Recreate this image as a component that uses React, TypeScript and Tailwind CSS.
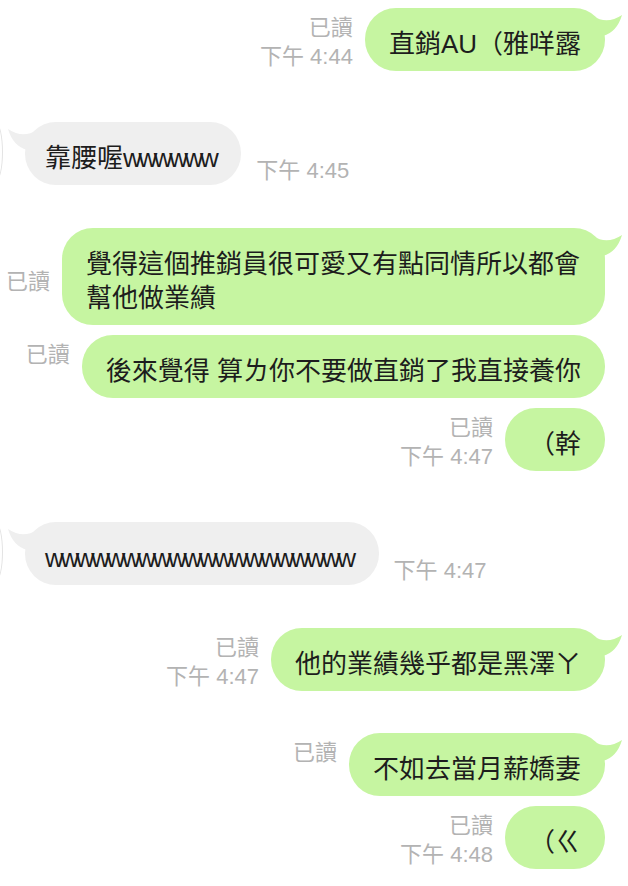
import type { ReactNode } from "react";

const FONT = "font-['Liberation_Sans','Noto_Sans_CJK_TC',sans-serif]";

function Meta({ read, time }: { read?: boolean; time?: string }) {
  return (
    <div className="flex shrink-0 flex-col items-end text-[22px] leading-[29px] text-[#b3b3b3]">
      {read && <span>已讀</span>}
      <span className="h-[29px]">{time ?? ""}</span>
    </div>
  );
}

function GreenTail() {
  return (
    <svg className="absolute top-0 right-[-18px]" width="30" height="30" viewBox="0 0 30 30">
      <path d="M0 8 Q14 17 29 7 Q24 24 10 28 Z" fill="#c6f5a1" />
    </svg>
  );
}

function GreyTail() {
  return (
    <svg className="absolute top-0 left-[-18px]" width="30" height="30" viewBox="0 0 30 30">
      <path d="M30 8 Q16 17 1 7 Q6 24 20 28 Z" fill="#efefef" />
    </svg>
  );
}

function Mine({
  children,
  time,
  tail,
  className,
}: {
  children: ReactNode;
  time?: string;
  tail?: boolean;
  className?: string;
}) {
  return (
    <div className={"flex items-end justify-end gap-[12px] " + (className ?? "")}>
      <Meta read time={time} />
      <div className="relative max-w-[543px] rounded-[31px] bg-[#c6f5a1] px-[24px] pt-[19px] pb-[10px] text-[26px] leading-[34px] text-[#1d1d1d]">
        {tail && <GreenTail />}
        {children}
      </div>
    </div>
  );
}

function Theirs({ children, time, className }: { children: ReactNode; time: string; className?: string }) {
  return (
    <div className={"flex items-end " + (className ?? "")}>
      <div className="mb-[3px] ml-[-11px] h-[58px] w-[14px] self-center rounded-[50%] border border-[#e3e3e3]" />
      <div className="relative ml-[22px] rounded-[31px] bg-[#efefef] pt-[19px] pr-[26px] pb-[10px] pl-[20px] text-[26px] leading-[34px] text-[#1d1d1d]">
        <GreyTail />
        {children}
      </div>
      <div className="ml-[15px] text-[22px] leading-[29px] text-[#b3b3b3]">{time}</div>
    </div>
  );
}

const W = ({ n }: { n: number }) => <span className="tracking-[-3.4px]">{"w".repeat(n)}</span>;

export default function App() {
  return (
    <div className={"min-h-[886px] w-[628px] overflow-hidden bg-white pt-[8px] pr-[23px] " + FONT}>
      <Mine time="下午 4:44" tail>
        直銷AU（雅咩露
      </Mine>
      <Theirs time="下午 4:45" className="mt-[51px]">
        靠腰喔
        <W n={6} />
      </Theirs>
      <Mine tail className="mt-[43px]">
        覺得這個推銷員很可愛又有點同情所以都會幫他做業績
      </Mine>
      <Mine className="mt-[10px]">後來覺得 算ㄌ你不要做直銷了我直接養你</Mine>
      <Mine time="下午 4:47" className="mt-[10px]">
        （幹
      </Mine>
      <Theirs time="下午 4:47" className="mt-[51px]">
        <W n={20} />
      </Theirs>
      <Mine time="下午 4:47" tail className="mt-[43px]">
        他的業績幾乎都是黑澤ㄚ
      </Mine>
      <Mine tail className="mt-[42px]">
        不如去當月薪嬌妻
      </Mine>
      <Mine time="下午 4:48" className="mt-[10px]">
        （ㄍ
      </Mine>
    </div>
  );
}
